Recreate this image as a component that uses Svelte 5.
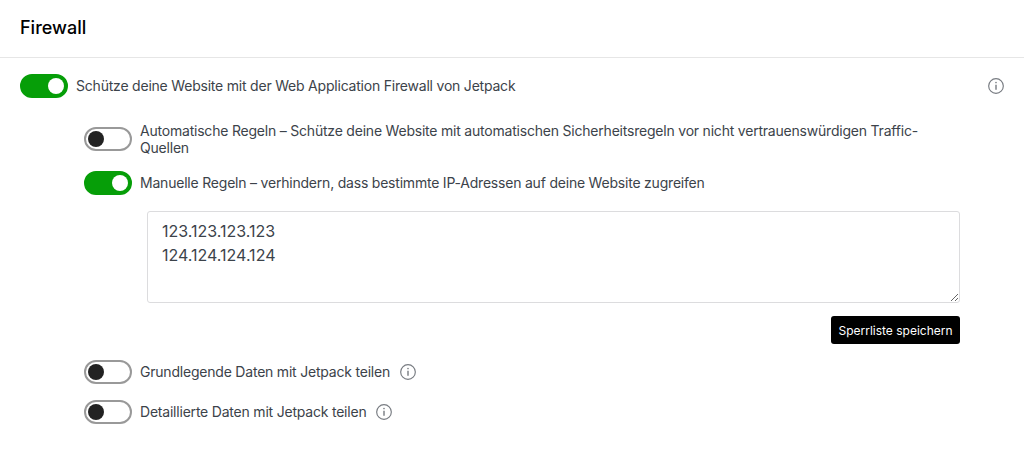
<script>
    const hint = 'M12 3.2a8.8 8.8 0 1 0 0 17.6 8.8 8.8 0 0 0 0-17.6Z';
</script>

{#snippet info(cls)}
    <svg class={cls} viewBox="0 0 24 24" width="20" height="20" aria-hidden="true">
        <path d={hint} fill="none" stroke="#787c82" stroke-width="1.4" />
        <path d="M12 10.6v6" stroke="#787c82" stroke-width="1.7" />
        <circle cx="12" cy="7.9" r="1" fill="#787c82" />
    </svg>
{/snippet}

{#snippet toggle(on)}
    <span class="toggle" class:on><span class="knob"></span></span>
{/snippet}

<div class="page">
    <header class="head">
        <h1>Firewall</h1>
    </header>

    <div class="main-row">
        {@render toggle(true)}
        <span class="label">Schütze deine Website mit der Web Application Firewall von Jetpack</span>
        {@render info('far')}
    </div>

    <div class="sub">
        <div class="row">
            {@render toggle(false)}
            <span class="label">Automatische Regeln – Schütze deine Website mit automatischen Sicherheitsregeln vor nicht vertrauenswürdigen Traffic-Quellen</span>
        </div>
        <div class="row manual">
            {@render toggle(true)}
            <span class="label">Manuelle Regeln – verhindern, dass bestimmte IP-Adressen auf deine Website zugreifen</span>
        </div>

        <div class="rules">
            <textarea spellcheck="false">123.123.123.123
124.124.124.124</textarea>
            <div class="actions">
                <button>Sperrliste speichern</button>
            </div>
        </div>

        <div class="row basic">
            {@render toggle(false)}
            <span class="label">Grundlegende Daten mit Jetpack teilen</span>
            {@render info('near')}
        </div>
        <div class="row detail">
            {@render toggle(false)}
            <span class="label">Detaillierte Daten mit Jetpack teilen</span>
            {@render info('near')}
        </div>
    </div>
</div>

<style>
    :global(body) {
        margin: 0;
        background: #fff;
    }

    .page {
        height: 458px;
        overflow: hidden;
        font-family: Inter, "Liberation Sans", sans-serif;
        color: #3c434a;
    }

    .head {
        height: 57px;
        border-bottom: 1px solid #e6e6e6;
        padding: 0 20px;
        display: flex;
        align-items: center;
    }

    h1 {
        margin: 0 0 2px;
        font-size: 18px;
        font-weight: 500;
        color: #000;
    }

    .main-row {
        display: flex;
        align-items: center;
        gap: 8px;
        margin: 16px 18px 0 20px;
    }

    .far {
        margin-left: auto;
    }

    .sub {
        margin: 24px 64px 0 84px;
    }

    .row {
        display: flex;
        gap: 8px;
        align-items: center;
    }

    .manual {
        margin-top: 15px;
    }

    .basic,
    .detail {
        margin-top: 16px;
    }

    .label {
        font-size: 14px;
        line-height: 16.5px;
        letter-spacing: -0.21px;
        padding-top: 1px;
    }

    .toggle {
        flex: none;
        box-sizing: border-box;
        width: 48px;
        height: 24px;
        border: 2px solid #999;
        border-radius: 12px;
        background: #fff;
        display: flex;
        align-items: center;
        padding-left: 2px;
    }

    .toggle.on {
        background: #069e08;
        border-color: #069e08;
        justify-content: flex-end;
        padding: 0 2px 0 0;
    }

    .knob {
        width: 16px;
        height: 16px;
        border-radius: 50%;
        background: #222;
    }

    .on .knob {
        background: #fff;
    }

    .rules {
        margin: 16px 0 0 63px;
    }

    textarea {
        display: block;
        box-sizing: border-box;
        width: 100%;
        height: 92px;
        padding: 7px 14px;
        margin: 0;
        border: 1px solid #dcdcde;
        border-radius: 3px;
        font: 16px/24px Inter, "Liberation Sans", sans-serif;
        color: #3c434a;
        outline: none;
    }

    .actions {
        display: flex;
        justify-content: flex-end;
        margin-top: 13px;
    }

    button {
        height: 28px;
        width: 129px;
        padding: 0;
        border: none;
        border-radius: 3px;
        background: #000;
        color: #fff;
        font: 12px Inter, "Liberation Sans", sans-serif;
    }
</style>
